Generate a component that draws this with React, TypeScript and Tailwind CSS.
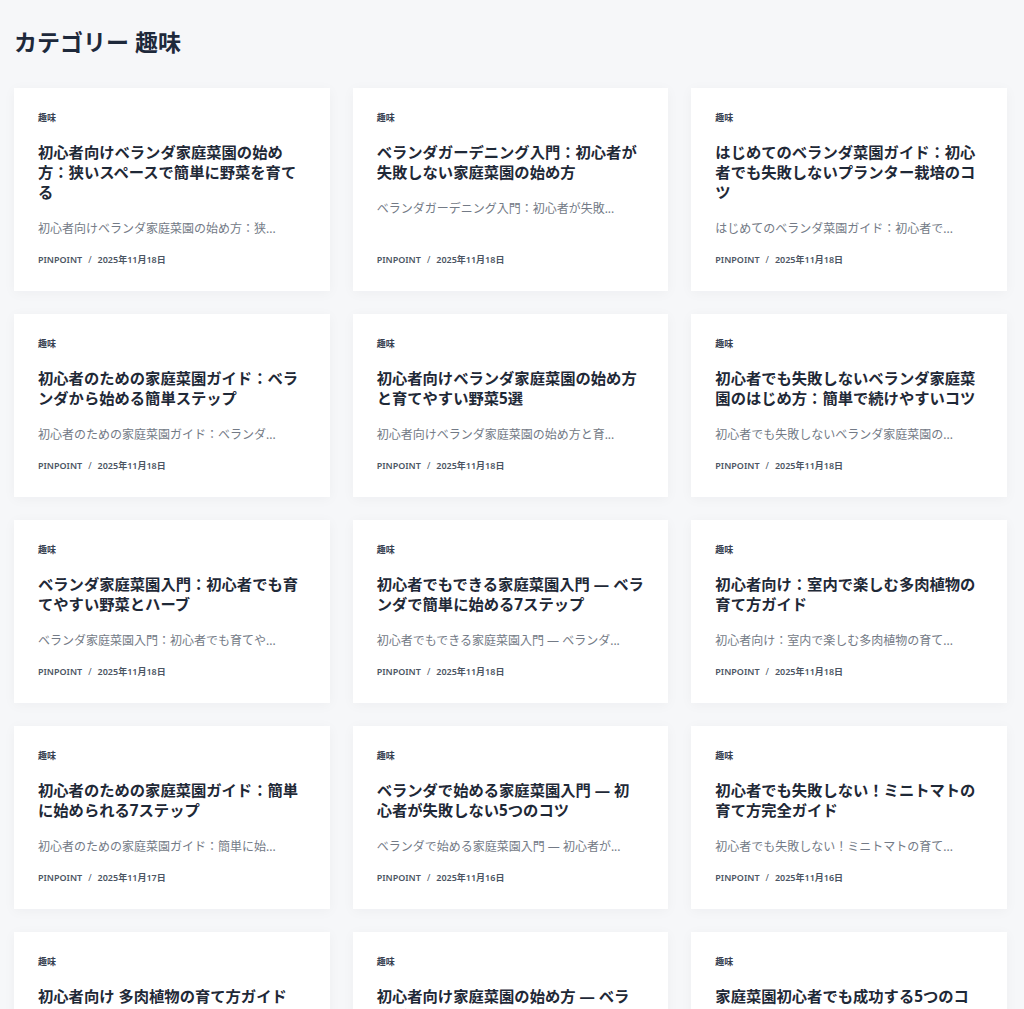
type Post = {
  title: string;
  excerpt: string;
  date: string;
};

const posts: Post[] = [
  {
    title: '初心者向けベランダ家庭菜園の始め方：狭いスペースで簡単に野菜を育てる',
    excerpt: '初心者向けベランダ家庭菜園の始め方：狭...',
    date: '2025年11月18日',
  },
  {
    title: 'ベランダガーデニング入門：初心者が失敗しない家庭菜園の始め方',
    excerpt: 'ベランダガーデニング入門：初心者が失敗...',
    date: '2025年11月18日',
  },
  {
    title: 'はじめてのベランダ菜園ガイド：初心者でも失敗しないプランター栽培のコツ',
    excerpt: 'はじめてのベランダ菜園ガイド：初心者で...',
    date: '2025年11月18日',
  },
  {
    title: '初心者のための家庭菜園ガイド：ベランダから始める簡単ステップ',
    excerpt: '初心者のための家庭菜園ガイド：ベランダ...',
    date: '2025年11月18日',
  },
  {
    title: '初心者向けベランダ家庭菜園の始め方と育てやすい野菜5選',
    excerpt: '初心者向けベランダ家庭菜園の始め方と育...',
    date: '2025年11月18日',
  },
  {
    title: '初心者でも失敗しないベランダ家庭菜園のはじめ方：簡単で続けやすいコツ',
    excerpt: '初心者でも失敗しないベランダ家庭菜園の...',
    date: '2025年11月18日',
  },
  {
    title: 'ベランダ家庭菜園入門：初心者でも育てやすい野菜とハーブ',
    excerpt: 'ベランダ家庭菜園入門：初心者でも育てや...',
    date: '2025年11月18日',
  },
  {
    title: '初心者でもできる家庭菜園入門 — ベランダで簡単に始める7ステップ',
    excerpt: '初心者でもできる家庭菜園入門 — ベランダ...',
    date: '2025年11月18日',
  },
  {
    title: '初心者向け：室内で楽しむ多肉植物の育て方ガイド',
    excerpt: '初心者向け：室内で楽しむ多肉植物の育て...',
    date: '2025年11月18日',
  },
  {
    title: '初心者のための家庭菜園ガイド：簡単に始められる7ステップ',
    excerpt: '初心者のための家庭菜園ガイド：簡単に始...',
    date: '2025年11月17日',
  },
  {
    title: 'ベランダで始める家庭菜園入門 — 初心者が失敗しない5つのコツ',
    excerpt: 'ベランダで始める家庭菜園入門 — 初心者が...',
    date: '2025年11月16日',
  },
  {
    title: '初心者でも失敗しない！ミニトマトの育て方完全ガイド',
    excerpt: '初心者でも失敗しない！ミニトマトの育て...',
    date: '2025年11月16日',
  },
  {
    title: '初心者向け 多肉植物の育て方ガイド【水やりと置き場所】',
    excerpt: '初心者向け 多肉植物の育て方ガイド【水...',
    date: '2025年11月16日',
  },
  {
    title: '初心者向け家庭菜園の始め方 — ベランダで育てる野菜入門',
    excerpt: '初心者向け家庭菜園の始め方 — ベランダ...',
    date: '2025年11月15日',
  },
  {
    title: '家庭菜園初心者でも成功する5つのコツとおすすめ野菜',
    excerpt: '家庭菜園初心者でも成功する5つのコツ...',
    date: '2025年11月15日',
  },
];

function PostCard({ post }: { post: Post }) {
  return (
    <article className="flex flex-col bg-white px-6 pt-6 pb-[25px] shadow-[0_2px_12px_rgba(15,23,42,0.04)]">
      <div className="text-[9px] leading-3 font-bold text-[#374151]">趣味</div>
      <h2 className="mt-[18px] text-[15.3px] leading-5 font-bold text-[#1f2937]">{post.title}</h2>
      <p className="mt-[17px] text-[12px] leading-5 text-[#737a86]">{post.excerpt}</p>
      <div className="mt-auto flex items-center pt-[15px] text-[9px] leading-3 font-semibold text-[#4b5563]">
        <span>PINPOINT</span>
        <span className="mx-[6px] font-normal">/</span>
        <span>{post.date}</span>
      </div>
    </article>
  );
}

export default function App() {
  return (
    <div
      className="min-h-screen bg-[#f6f7f9] pt-[26px] pr-[17px] pb-10 pl-[14px]"
      style={{ fontFamily: '"Noto Sans", "Noto Sans CJK JP", sans-serif' }}
    >
      <h1 className="text-[23px] leading-8 font-bold text-[#1e293b]">カテゴリー 趣味</h1>
      <div className="mt-[30px] grid grid-cols-3 gap-x-[23px] gap-y-[23px]">
        {posts.map((post, i) => (
          <PostCard key={i} post={post} />
        ))}
      </div>
    </div>
  );
}
